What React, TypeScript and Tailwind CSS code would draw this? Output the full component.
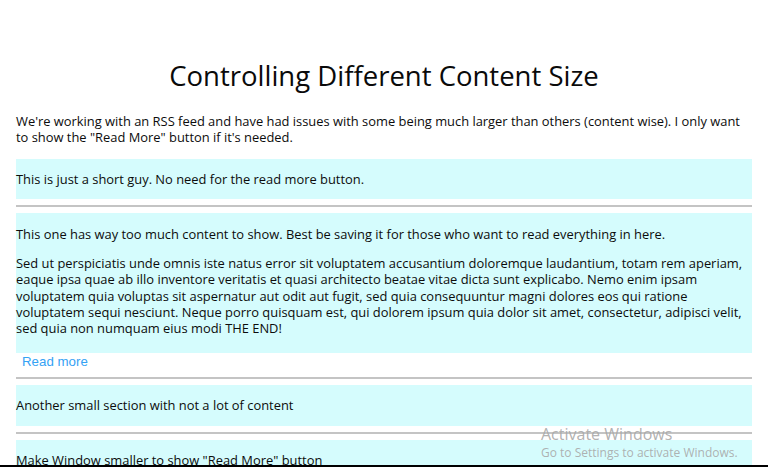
import React from 'react';

const lorem =
  'Sed ut perspiciatis unde omnis iste natus error sit voluptatem accusantium doloremque laudantium, totam rem aperiam, eaque ipsa quae ab illo inventore veritatis et quasi architecto beatae vitae dicta sunt explicabo. Nemo enim ipsam voluptatem quia voluptas sit aspernatur aut odit aut fugit, sed quia consequuntur magni dolores eos qui ratione voluptatem sequi nesciunt. Neque porro quisquam est, qui dolorem ipsum quia dolor sit amet, consectetur, adipisci velit, sed quia non numquam eius modi THE END!';

const Divider = () => <hr className="border-0 border-t-2 border-[#c4c4c4] my-[6px]" />;

export default function App() {
  return (
    <div className="relative min-h-[467px] bg-white font-['Open_Sans',sans-serif] text-[#0c0c0c] text-[12.9px] leading-[16.25px] px-4 overflow-hidden">
      <h1 className="pt-[58px] text-center text-[27.5px] leading-[36px] text-[#0a0a0a]">
        Controlling Different Content Size
      </h1>

      <p className="mt-[19px] mb-[13px]">
        We're working with an RSS feed and have had issues with some being much larger than others (content wise). I only
        want to show the "Read More" button if it's needed.
      </p>

      {/* Short section */}
      <div className="bg-[#d5fcfd] py-[12px]">
        <p>This is just a short guy. No need for the read more button.</p>
      </div>
      <Divider />

      {/* Long section */}
      <div className="bg-[#d5fcfd] pt-[13px] pb-[17px]">
        <p>This one has way too much content to show. Best be saving it for those who want to read everything in here.</p>
        <p className="mt-[13px]">{lorem}</p>
      </div>
      <button className="block px-[6px] pt-0 pb-[1px] font-['Liberation_Sans',Arial,sans-serif] text-[13.3px] leading-[17px] text-[#35a2f4]">
        Read more
      </button>
      <Divider />

      <div className="bg-[#d5fcfd] py-[12px]">
        <p>Another small section with not a lot of content</p>
      </div>
      <Divider />

      <div className="bg-[#d5fcfd] py-[12px]">
        <p>Make Window smaller to show "Read More" button</p>
      </div>

      {/* Windows activation watermark */}
      <div className="absolute left-[541px] top-[425px] text-[#a8a8a8]/90 pointer-events-none">
        <div className="text-[16px] leading-[19px]">Activate Windows</div>
        <div className="text-[12px] leading-[15px] mt-[1px]">Go to Settings to activate Windows.</div>
      </div>
      <div className="absolute left-0 right-0 top-[465px] h-[2px] bg-black" />
    </div>
  );
}
